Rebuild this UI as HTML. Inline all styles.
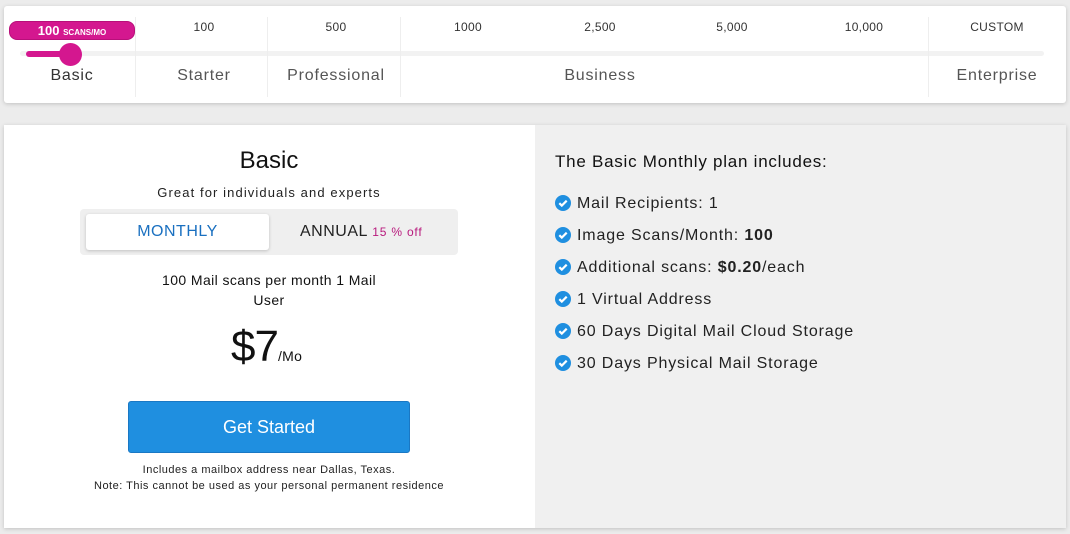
<!DOCTYPE html>
<html><head><meta charset="utf-8"><style>
*{margin:0;padding:0;box-sizing:border-box}
body{width:1070px;height:534px;background:#ececec;font-family:"Liberation Sans",sans-serif;position:relative;overflow:hidden;color:#222}
.a{position:absolute}
.card1{left:4px;top:6px;width:1062px;height:97px;background:#fff;box-shadow:0 1px 4px rgba(0,0,0,.18);border-radius:3px}
.div{width:1px;background:#eee;top:17px;height:80px}
.num{top:20px;font-size:12px;color:#333;width:132px;text-align:center;margin-left:-66px;letter-spacing:.3px}
.lab{top:67px;font-size:16px;color:#555;width:200px;text-align:center;margin-left:-100px;letter-spacing:.8px}
.card2{left:4px;top:125px;width:1062px;height:403px;background:#fff;box-shadow:0 1px 4px rgba(0,0,0,.18)}
.right{left:535px;top:125px;width:531px;height:403px;background:#f0f0f0}
.c{text-align:center;width:460px;left:39px}
.li{left:555px;font-size:16px;color:#222;letter-spacing:.85px}
.li svg{position:absolute;left:0;top:1px}
.li span{position:absolute;left:22px;top:1px;white-space:nowrap}
</style></head><body>
<div class="a card1"></div>
<div class="a" style="left:20px;top:51px;width:1024px;height:5px;background:#f2f2f2;border-radius:3px"></div>
<div class="a div" style="left:135px"></div>
<div class="a div" style="left:267px"></div>
<div class="a div" style="left:400px"></div>
<div class="a div" style="left:928px"></div>
<div class="a" style="left:26px;top:51px;width:46px;height:6px;background:#d4178f;border-radius:3px"></div>
<div class="a" style="left:59px;top:43px;width:23px;height:23px;background:#d4178f;border-radius:50%"></div>
<div class="a" style="left:9px;top:21px;width:126px;height:19px;background:#d4178f;border-radius:8px;border:1px solid #b80f7a;color:#fff;font-weight:bold;font-size:13px;text-align:center;line-height:17px">100 <span style="font-size:8px">SCANS/MO</span></div>
<div class="a num" style="left:204px">100</div>
<div class="a num" style="left:336px">500</div>
<div class="a num" style="left:468px">1000</div>
<div class="a num" style="left:600px">2,500</div>
<div class="a num" style="left:732px">5,000</div>
<div class="a num" style="left:864px">10,000</div>
<div class="a num" style="left:997px">CUSTOM</div>
<div class="a lab" style="left:72px;color:#333">Basic</div>
<div class="a lab" style="left:204px">Starter</div>
<div class="a lab" style="left:336px">Professional</div>
<div class="a lab" style="left:600px">Business</div>
<div class="a lab" style="left:997px">Enterprise</div>

<div class="a card2"></div>
<div class="a right"></div>
<div class="a c" style="top:147px;font-size:24px;color:#111">Basic</div>
<div class="a c" style="top:185px;font-size:13px;color:#222;letter-spacing:1.1px">Great for individuals and experts</div>
<div class="a" style="left:80px;top:209px;width:378px;height:46px;background:#efefef;border-radius:4px"></div>
<div class="a" style="left:86px;top:214px;width:183px;height:36px;background:#fff;border-radius:3px;box-shadow:0 1px 3px rgba(0,0,0,.2);color:#1a70c0;font-size:16px;text-align:center;line-height:36px;letter-spacing:.5px">MONTHLY</div>
<div class="a" style="left:300px;top:223px;font-size:16px;color:#222;letter-spacing:.5px">ANNUAL <span style="font-size:12px;color:#b81a7d;letter-spacing:.8px">15 % off</span></div>
<div class="a c" style="top:270px;font-size:14px;line-height:20px;color:#111;letter-spacing:.4px"><div>100 Mail scans per month 1 Mail</div><div>User</div></div>
<div class="a" style="left:231px;top:322px;font-size:44px;color:#111;letter-spacing:-1px">$7<span style="font-size:14px;letter-spacing:.3px">/Mo</span></div>
<div class="a" style="left:128px;top:401px;width:282px;height:52px;background:#1f8fe0;border:1px solid #1a78c4;border-radius:3px;color:#fff;font-size:18px;text-align:center;line-height:50px">Get Started</div>
<div class="a c" style="top:462px;font-size:11px;line-height:16px;color:#222;letter-spacing:.5px"><div>Includes a mailbox address near Dallas, Texas.</div><div>Note: This cannot be used as your personal permanent residence</div></div>

<div class="a" style="left:555px;top:152px;font-size:17px;color:#111;letter-spacing:.75px">The Basic Monthly plan includes:</div>
<div class="a li" style="top:194px"><svg width="16" height="16" viewBox="0 0 16 16"><circle cx="8" cy="8" r="8" fill="#1f8fe0"/><path d="M4.3 8.2l2.5 2.4 4.9-4.9" stroke="#fff" stroke-width="2.2" fill="none"/></svg><span>Mail Recipients: 1</span></div>
<div class="a li" style="top:226px"><svg width="16" height="16" viewBox="0 0 16 16"><circle cx="8" cy="8" r="8" fill="#1f8fe0"/><path d="M4.3 8.2l2.5 2.4 4.9-4.9" stroke="#fff" stroke-width="2.2" fill="none"/></svg><span>Image Scans/Month: <b>100</b></span></div>
<div class="a li" style="top:258px"><svg width="16" height="16" viewBox="0 0 16 16"><circle cx="8" cy="8" r="8" fill="#1f8fe0"/><path d="M4.3 8.2l2.5 2.4 4.9-4.9" stroke="#fff" stroke-width="2.2" fill="none"/></svg><span>Additional scans: <b>$0.20</b>/each</span></div>
<div class="a li" style="top:290px"><svg width="16" height="16" viewBox="0 0 16 16"><circle cx="8" cy="8" r="8" fill="#1f8fe0"/><path d="M4.3 8.2l2.5 2.4 4.9-4.9" stroke="#fff" stroke-width="2.2" fill="none"/></svg><span>1 Virtual Address</span></div>
<div class="a li" style="top:322px"><svg width="16" height="16" viewBox="0 0 16 16"><circle cx="8" cy="8" r="8" fill="#1f8fe0"/><path d="M4.3 8.2l2.5 2.4 4.9-4.9" stroke="#fff" stroke-width="2.2" fill="none"/></svg><span>60 Days Digital Mail Cloud Storage</span></div>
<div class="a li" style="top:354px"><svg width="16" height="16" viewBox="0 0 16 16"><circle cx="8" cy="8" r="8" fill="#1f8fe0"/><path d="M4.3 8.2l2.5 2.4 4.9-4.9" stroke="#fff" stroke-width="2.2" fill="none"/></svg><span>30 Days Physical Mail Storage</span></div>
</body></html>
